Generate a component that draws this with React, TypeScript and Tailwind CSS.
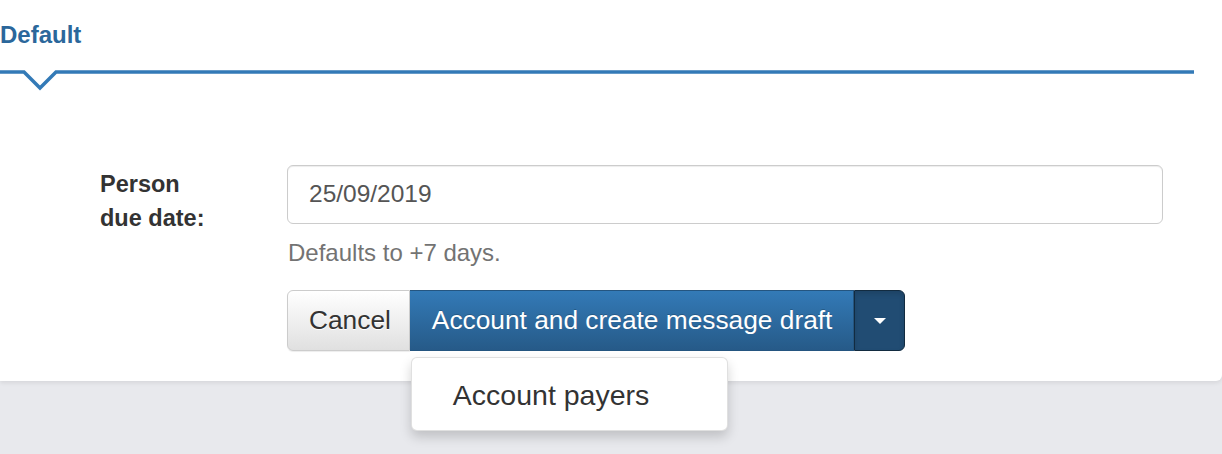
import React from "react";

const sans = { fontFamily: '"Liberation Sans", Arial, Helvetica, sans-serif' };

function TabRule() {
  // Blue rule with a downward notch under the active tab
  return (
    <svg width="1194" height="24" viewBox="0 0 1194 24" className="block mt-[16px]">
      <polyline
        points="0,4 24,4 40,20 56,4 1194,4"
        fill="none"
        stroke="#337ab7"
        strokeWidth="3.5"
        strokeLinejoin="miter"
      />
    </svg>
  );
}

export default function App() {
  return (
    <div className="w-[1222px] h-[454px] bg-[#e8e9ed] overflow-hidden text-[#333]" style={sans}>
      <div className="bg-white h-[381px] rounded-br-[6px] shadow-[0_2px_4px_rgba(0,0,0,0.08)] flex flex-col">
        <div className="mt-[18px] text-[24px] leading-[34px] font-bold text-[#2b679b]">Default</div>
        <TabRule />

        <div className="mt-[73px] flex pl-[100px]">
          <div className="w-[187px] pt-[2px] text-[23.5px] leading-[34px] font-bold text-[#333]">
            Person
            <br />
            due date:
          </div>

          <div className="w-[876px] flex flex-col">
            <div className="h-[59px] border border-[#ccc] rounded-[6px] px-[21px] flex items-center text-[24.5px] text-[#555] shadow-[inset_0_1px_1px_rgba(0,0,0,0.075)]">
              25/09/2019
            </div>
            <div className="mt-[14px] pl-[1px] text-[24px] leading-[30px] text-[#737373]">Defaults to +7 days.</div>

            <div className="mt-[22px] flex h-[61px] text-[26.3px]">
              <button
                className="h-full pl-[21px] pr-[18px] border border-[#ccc] rounded-l-[6px] bg-[linear-gradient(to_bottom,#ffffff,#e0e0e0)] text-[#333] [text-shadow:0_1px_0_#fff] shadow-[0_1px_1px_rgba(0,0,0,0.075)]"
                style={sans}
              >
                Cancel
              </button>
              <div className="relative flex h-full">
                <button
                  className="h-full pl-[22px] pr-[21px] border border-[#245580] border-l-0 bg-[linear-gradient(to_bottom,#337ab7,#265a88)] text-white [text-shadow:0_-1px_0_rgba(0,0,0,0.2)]"
                  style={sans}
                >
                  Account and create message draft
                </button>
                <button className="h-full w-[51px] flex items-center justify-center border border-[#122b40] rounded-r-[6px] bg-[#214c73] shadow-[inset_0_3px_5px_rgba(0,0,0,0.125)]">
                  <svg width="12" height="6" viewBox="0 0 12 6">
                    <polygon points="0,0 12,0 6,6" fill="#fff" />
                  </svg>
                </button>

                <div className="absolute left-[1px] top-[67px] w-[317px] h-[74px] bg-white border border-[rgba(0,0,0,0.12)] rounded-[6px] shadow-[0_6px_12px_rgba(0,0,0,0.175)] flex items-center pl-[41px] pt-[2px] text-[28.5px] text-[#333]">
                  Account payers
                </div>
              </div>
            </div>
          </div>
        </div>
      </div>
    </div>
  );
}
